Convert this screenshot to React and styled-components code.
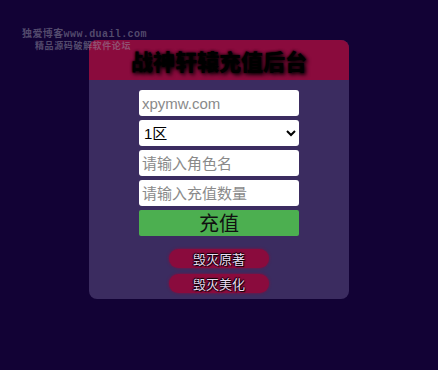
import styled, { createGlobalStyle } from 'styled-components';

const GlobalStyle = createGlobalStyle`
    html, body {
        margin: 0;
        padding: 0;
        background: #120235;
        font-family: "Liberation Sans", "Noto Sans CJK SC", sans-serif;
    }
`;

const Page = styled.div`
    position: relative;
    width: 438px;
    height: 370px;
    padding-top: 40px;
    box-sizing: border-box;
    display: flex;
    justify-content: center;
    align-items: flex-start;
`;

const Watermark = styled.div`
    position: absolute;
    top: 29px;
    left: 22px;
    z-index: 5;
    color: rgba(150, 148, 165, 0.5);
    font-family: "Liberation Mono", "Noto Sans CJK SC", monospace;
    font-weight: bold;
    line-height: 12px;

    .wm-site {
        font-size: 10px;
        letter-spacing: 0.4px;
    }

    .wm-forum {
        font-size: 9px;
        letter-spacing: 0.6px;
        margin-left: 13px;
    }
`;

const Panel = styled.div`
    width: 260px;
    height: 259px;
    border-radius: 8px;
    background: #3b2c60;
    overflow: hidden;
    display: flex;
    flex-direction: column;
    align-items: center;
`;

const Header = styled.div`
    align-self: stretch;
    height: 40px;
    background: #8a0b3d;
    display: flex;
    align-items: center;
    justify-content: center;
`;

const Title = styled.h1`
    margin: 0;
    font-size: 22px;
    font-weight: 900;
    color: #000;
    text-shadow: 2px 2px 4px #000, 0 0 3px #000;
`;

const Form = styled.form`
    width: 160px;
    margin-top: 10px;
    display: flex;
    flex-direction: column;
    gap: 4px;
`;

const Field = styled.input`
    box-sizing: border-box;
    height: 26px;
    width: 100%;
    border: none;
    border-radius: 3px;
    padding: 0 3px;
    background: #fff;
    font-size: 15px;
    font-family: "Liberation Sans", "Noto Sans CJK SC", sans-serif;
    color: #000;

    &::placeholder {
        color: #8a8a8a;
    }
`;

const Select = styled.select`
    box-sizing: border-box;
    height: 26px;
    width: 100%;
    border: none;
    border-radius: 3px;
    padding: 0 1px;
    background: #fff;
    font-size: 15px;
    font-family: "Liberation Sans", "Noto Sans CJK SC", sans-serif;
    color: #000;
`;

const Submit = styled.button`
    height: 26px;
    width: 100%;
    border: none;
    border-radius: 2px;
    background: #4caf50;
    color: #111;
    font-size: 20px;
    line-height: 26px;
    padding: 0;
    font-family: "Noto Sans CJK SC", sans-serif;
`;

const Links = styled.div`
    margin-top: 13px;
    display: flex;
    flex-direction: column;
    gap: 6px;
`;

const Pill = styled.a`
    width: 100px;
    height: 19px;
    border-radius: 10px;
    background: #8a0b3d;
    box-shadow: 0 0 3px #8a0b3d;
    display: flex;
    align-items: center;
    justify-content: center;
    color: #eadcf2;
    font-size: 13px;
    font-family: "Noto Sans CJK SC", sans-serif;
    text-decoration: none;
    text-shadow: 1px 1px 1px #000, -1px 0 1px #000, 0 -1px 1px #000;
`;

export default function App() {
    return (
        <Page>
            <GlobalStyle />
            <Watermark>
                <div className="wm-site">独爱博客www.duail.com</div>
                <div className="wm-forum">精品源码破解软件论坛</div>
            </Watermark>
            <Panel>
                <Header>
                    <Title>战神轩辕充值后台</Title>
                </Header>
                <Form onSubmit={(e) => e.preventDefault()}>
                    <Field type="text" placeholder="xpymw.com" />
                    <Select defaultValue="1">
                        <option value="1">1区</option>
                        <option value="2">2区</option>
                    </Select>
                    <Field type="text" placeholder="请输入角色名" />
                    <Field type="text" placeholder="请输入充值数量" />
                    <Submit type="submit">充值</Submit>
                </Form>
                <Links>
                    <Pill href="#">毁灭原著</Pill>
                    <Pill href="#">毁灭美化</Pill>
                </Links>
            </Panel>
        </Page>
    );
}
